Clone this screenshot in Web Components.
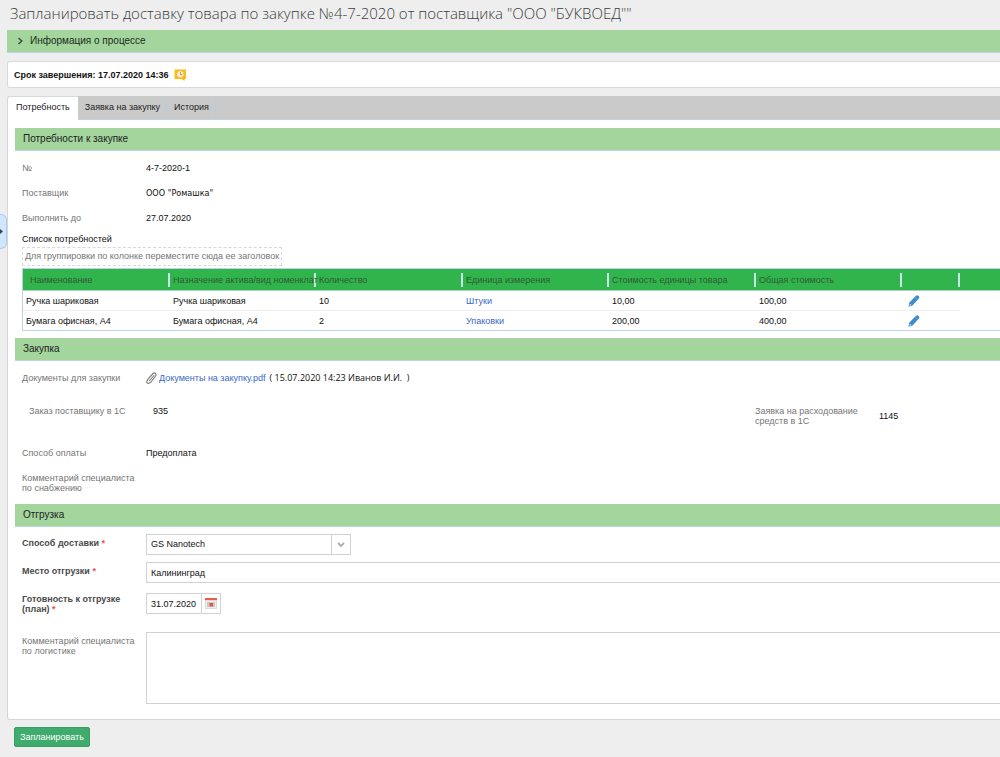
<!DOCTYPE html>
<html lang="ru">
<head>
<meta charset="utf-8">
<meta name="viewport" content="width=device-width, initial-scale=1">
<title>Запланировать доставку товара</title>
<style>
  html { height: 100%; }
  body {
    margin: 0;
    min-height: 100%;
    background: #eee;
    color: #111;
    font: 9px/10px "Liberation Sans", Arial, sans-serif;
    overflow-x: hidden;
  }
</style>
</head>
<body>
<task-page heading='Запланировать доставку товара по закупке №4-7-2020 от поставщика "ООО "БУКВОЕД""'>
  <process-info>Информация о процессе</process-info>
  <deadline-bar>Срок завершения: 17.07.2020 14:36</deadline-bar>
  <tab-panel tabs="Потребность|Заявка на закупку|История">
    <form-section heading="Потребности к закупке">
      <static-field label="№">4-7-2020-1</static-field>
      <static-field label="Поставщик" class="human">ООО "Ромашка"</static-field>
      <static-field label="Выполнить до">27.07.2020</static-field>
      <needs-table></needs-table>
    </form-section>
    <form-section heading="Закупка">
      <static-field label="Документы для закупки"><file-link name="Документы на закупку.pdf">( 15.07.2020 14:23 Иванов И.И. &nbsp;)</file-link></static-field>
      <field-pair>
        <static-field class="top" label="Заказ поставщику в 1С">935</static-field>
        <static-field class="mid" label="Заявка на расходование средств в 1С">1145</static-field>
      </field-pair>
      <static-field label="Способ оплаты">Предоплата</static-field>
      <static-field class="note" label="Комментарий специалиста по снабжению"></static-field>
    </form-section>
    <form-section heading="Отгрузка">
      <input-field kind="select" label="Способ доставки" value="GS Nanotech" required></input-field>
      <input-field kind="text" label="Место отгрузки" value="Калининград" required></input-field>
      <input-field kind="date" label="Готовность к отгрузке (план)" value="31.07.2020" required></input-field>
      <input-field kind="area" label="Комментарий специалиста по логистике"></input-field>
    </form-section>
  </tab-panel>
  <action-button slot="actions">Запланировать</action-button>
</task-page>

<script>
const define = (name, render) => customElements.define(name, class extends HTMLElement {
  connectedCallback() {
    if (this.shadowRoot) return;
    const template = document.createElement('template');
    template.innerHTML = render(this);
    this.attachShadow({ mode: 'open' }).append(template.content.cloneNode(true));
  }
});

define('task-page', el => `
  <style>
    :host { display: block; position: relative; padding-left: 7px; }
    h1 { margin: 0; padding: 0 3px 2px; font: 350 15px/26px "Open Sans", "Noto Sans", sans-serif; color: #3c3c3c; white-space: nowrap; }
    main { display: flex; flex-direction: column; gap: 8px; padding-top: 2px; }
    footer { padding: 7px 7px 10px; }
    .drawer { position: absolute; left: 0; top: 214px; width: 7px; height: 35px; padding: 0; box-sizing: border-box;
      border: 1px solid #a9cbee; border-left: 0; border-radius: 0 6px 6px 0; background: #cfe6fc; display: flex; align-items: center; }
  </style>
  <h1>${el.getAttribute('heading')}</h1>
  <main><slot></slot></main>
  <footer><slot name="actions"></slot></footer>
  <button class="drawer" aria-label="Открыть меню"><svg width="3" height="5" viewBox="0 0 3 5"><path d="M0 0L3 2.500L0 5Z" fill="#345"/></svg></button>`);

define('process-info', () => `
  <style>
    :host { display: block; background: #a3d59d; border-bottom: 1px solid #bcd4ea; }
    button { display: flex; align-items: center; gap: 6px; width: 100%; height: 22px; padding: 0 10px; border: 0; background: none;
      font: 10px/12px "Liberation Sans", Arial, sans-serif; color: #1c2b1c; }
  </style>
  <button aria-expanded="false"><svg width="7" height="8" viewBox="0 0 7 8"><path d="M1.500 1L4.800 4L1.500 7" fill="none" stroke="#3d4a3d" stroke-width="1.500"/></svg><slot></slot></button>`);

define('deadline-bar', () => `
  <style>
    :host { display: flex; align-items: center; gap: 5px; height: 25px; padding-left: 6px; background: #fff; border: 1px solid #d6d9dd; border-right: 0; border-radius: 3px 0 0 3px; font-weight: 700; }
  </style>
  <span><slot></slot></span>
  <svg width="13" height="12" viewBox="0 0 13 12"><path d="M.5 .5H12V10H10.500V12L7.500 10H.5Z" fill="#fabd12"/><circle cx="6.300" cy="5.200" r="3.500" fill="#fff5e0" stroke="#f3a43e" stroke-width=".6"/><path d="M6.300 3V5.500H8.300" fill="none" stroke="#d9772b" stroke-width=".9"/></svg>`);

define('tab-panel', el => `
  <style>
    :host { display: block; }
    nav { display: flex; height: 24px; box-sizing: border-box; background: #cacaca; border-bottom: 1px solid #bfd2e8; border-radius: 3px 0 0 0; }
    button { height: 23px; margin: 0; padding: 0 7px 2px; border: 0; background: linear-gradient(#b3cbe6, #b3cbe6) right center / 1px 14px no-repeat;
      font: 9px/10px "Liberation Sans", Arial, sans-serif; color: #222; }
    button[aria-selected=true] { height: 24px; padding: 0 8px 3px; background: #fff; border: 1px solid #d6d9dd; border-width: 1px 0 0 1px; border-radius: 3px 0 0 0; }
    .body { background: #fff; border: 1px solid #d3d6da; border-width: 0 0 1px 1px; border-radius: 0 0 0 3px; padding: 8px 0 0 7px; display: flex; flex-direction: column; }
  </style>
  <nav role="tablist">${el.getAttribute('tabs').split('|').map((t, i) => `<button role="tab" aria-selected="${i === 0}">${t}</button>`).join('')}</nav>
  <div class="body" role="tabpanel"><slot></slot></div>`);

define('form-section', el => `
  <style>
    :host { display: block; }
    h2 { margin: 0; height: 22px; padding-left: 8px; background: #a3d59d; border-bottom: 1px solid #bcd4ea; font: 400 10px/22px "Liberation Sans", Arial, sans-serif; color: #222; }
    .rows { padding: 4px 0 0 7px; }
  </style>
  <h2>${el.getAttribute('heading')}</h2>
  <div class="rows"><slot></slot></div>`);

define('static-field', el => `
  <style>
    :host { display: grid; grid-template-columns: 116px 1fr; column-gap: 8px; align-items: center; min-height: 25px; }
    :host(.human) .value { font-family: "DejaVu Sans Condensed", "DejaVu Sans", sans-serif; }
    :host(.top), :host(.mid) { min-height: 0; }
    :host(.top) { align-items: start; }
    :host(.note) { box-sizing: border-box; min-height: 39px; padding-bottom: 3px; }
    .label { color: #757575; }
  </style>
  <span class="label">${el.getAttribute('label')}</span>
  <span class="value"><slot></slot></span>`);

define('field-pair', () => `
  <style>
    :host { display: grid; grid-template-columns: 726px 1fr; padding: 16px 0 14px 7px; }
  </style>
  <slot></slot>`);

define('file-link', el => `
  <style>
    :host { display: flex; align-items: center; gap: 2px; }
    a { color: #3a68c8; text-decoration: none; }
    .meta { padding-left: 2px; font-family: "Open Sans", "Noto Sans", sans-serif; white-space: pre; }
  </style>
  <svg width="11" height="12" viewBox="0 0 11 12"><g fill="none" stroke="#777" stroke-width="1.100" stroke-linecap="round"><path d="M3.500 8.500L8 3.500M5 3.800L7 1.500C8.500 0 11 2 9.600 4L5.800 9C4 11.600 1.500 12 .8 10.300C.3 9 1.500 7.500 3 5.800L6.200 2.500"/></g></svg>
  <a href="#">${el.getAttribute('name')}</a>
  <span class="meta"><slot></slot></span>`);

const COLUMNS = ['Наименование', 'Назначение актива/вид номенклат', 'Количество', 'Единица измерения', 'Стоимость единицы товара', 'Общая стоимость', '', ''];
const WIDTHS = [147, 146, 147, 146, 147, 146, 58];
const NEEDS = [
  ['Ручка шариковая', 'Ручка шариковая', '10', 'Штуки', '10,00', '100,00'],
  ['Бумага офисная, А4', 'Бумага офисная, А4', '2', 'Упаковки', '200,00', '400,00']
];
const PENCIL = '<svg width="12" height="12" viewBox="0 0 12 12"><path d="M.5 11.700L1.200 7.800L8 .8Q9.300-.2 10.600 1Q11.800 2.300 10.900 3.600L4.200 10.700Z" fill="#3d8bcf"/><path d="M1.900 8.600L3.500 10.200L1.500 10.700Z" fill="#cfe3f4"/><path d="M7.300 2.200L9.600 4.500" stroke="#8dbce4" stroke-width=".6"/></svg>';

define('needs-table', () => `
  <style>
    :host { display: block; padding: 4px 0 7px; }
    h3 { margin: 0; font: inherit; color: #111; }
    .drop { width: max-content; box-sizing: border-box; height: 19px; margin: 3px 0 2px; padding: 0 2px; border: 1px dashed #d8d8d8; line-height: 17px; color: #757575; }
    table { width: 100%; table-layout: fixed; border-collapse: separate; border-spacing: 0; border: 1px solid #bdd3ea; border-right: 0; }
    th, td { padding: 0 0 0 3px; text-align: left; font-weight: 400; white-space: nowrap; }
    th { height: 21px; color: #2f5a37; background: #32b44c linear-gradient(#c6e8ec, #c6e8ec) right center / 2px 14px no-repeat; border-bottom: 1px solid #a9cfc4; }
    th:first-child { padding-left: 7px; }
    th:last-child { background: #32b44c; }
    td { height: 19px; background: #fff; border-bottom: 1px solid #ededed; }
    td:last-child { border-bottom-color: #fff; }
    tr:last-child td { border-bottom: 0; }
    a { color: #3a68c8; text-decoration: none; }
    button { display: block; margin: 0 0 0 3px; padding: 0; border: 0; background: none; height: 12px; }
    svg { display: block; }
  </style>
  <h3>Список потребностей</h3>
  <div class="drop">Для группировки по колонке переместите сюда ее заголовок</div>
  <table>
    <colgroup>${WIDTHS.map(w => `<col style="width:${w}px">`).join('')}<col></colgroup>
    <thead><tr>${COLUMNS.map(c => `<th>${c}</th>`).join('')}</tr></thead>
    <tbody>${NEEDS.map(r => `<tr>${r.map((c, i) => `<td>${i === 3 ? `<a href="#">${c}</a>` : c}</td>`).join('')}<td><button aria-label="Изменить">${PENCIL}</button></td><td></td></tr>`).join('')}</tbody>
  </table>`);

const CHEVRON = '<svg width="8" height="6" viewBox="0 0 8 6"><path d="M1 1L4 4L7 1" fill="none" stroke="#a9adb3" stroke-width="1.800"/></svg>';
const CALENDAR = '<svg width="12" height="11" viewBox="0 0 12 11"><path d="M0 0H12V11H0Z" fill="#d9d9d9"/><path d="M0 0H12V2H0Z" fill="#ee5a4c"/><path d="M1 3H11V10H1Z" fill="#eee"/><path d="M2 4H10V9H2Z" fill="#c9c9c9"/><path d="M4.500 5H8V8.500H4.500Z" fill="#e8554a"/></svg>';
const CONTROLS = {
  select: v => `<div class="combo"><select id="c"><option>${v}</option></select><span class="arrow">${CHEVRON}</span></div>`,
  text: v => `<input id="c" type="text" value="${v}">`,
  date: v => `<div class="date"><input id="c" type="text" value="${v}"><button aria-label="Выбрать дату">${CALENDAR}</button></div>`,
  area: () => `<textarea id="c"></textarea>`
};

define('input-field', el => `
  <style>
    :host { display: grid; grid-template-columns: 116px 1fr; column-gap: 8px; align-items: start; padding: 3px 0; }
    :host([kind=text]) { padding: 4px 0; }
    :host([kind=date]) { padding: 6px 0 5px; }
    :host([kind=area]) { padding: 13px 0 15px; }
    label { color: #757575; padding-top: 4px; }
    :host([kind=date]) label { padding-top: 1px; }
    :host([required]) label { font-weight: 700; color: #4a4a4a; }
    i { font-style: normal; color: #f04a3e; }
    input, select, textarea { display: block; box-sizing: border-box; width: 100%; height: 21px; margin: 0; padding: 0 4px; border: 1px solid #d0d2d6; border-radius: 0; outline: 0;
      background: #fff; color: #111; font: 9px/19px "Liberation Sans", Arial, sans-serif; appearance: none; resize: none; }
    textarea { height: 72px; border-right: 0; }
    :host([kind=text]) input { border-right: 0; }
    .combo { position: relative; width: 205px; }
    .arrow { position: absolute; right: 1px; top: 1px; bottom: 1px; width: 18px; border-left: 1px solid #d0d2d6; display: flex; align-items: center; justify-content: center; pointer-events: none; }
    .date { display: flex; width: 75px; }
    .date input { width: 56px; }
    button { box-sizing: border-box; width: 19px; height: 21px; padding: 0; border: 1px solid #d0d2d6; border-left: 0; background: #fff; display: flex; align-items: center; justify-content: center; }
  </style>
  <label for="c">${el.getAttribute('label')}${el.hasAttribute('required') ? ' <i>*</i>' : ''}</label>
  ${CONTROLS[el.getAttribute('kind')](el.getAttribute('value'))}`);

define('action-button', () => `
  <style>
    :host { display: block; }
    button { display: block; box-sizing: border-box; height: 20px; padding: 0 5px; border: 1px solid #35a263; border-radius: 2px; background: #3fab6c; color: #fff;
      font: 9px/18px "Liberation Sans", Arial, sans-serif; }
  </style>
  <button><slot></slot></button>`);
</script>
</body>
</html>
